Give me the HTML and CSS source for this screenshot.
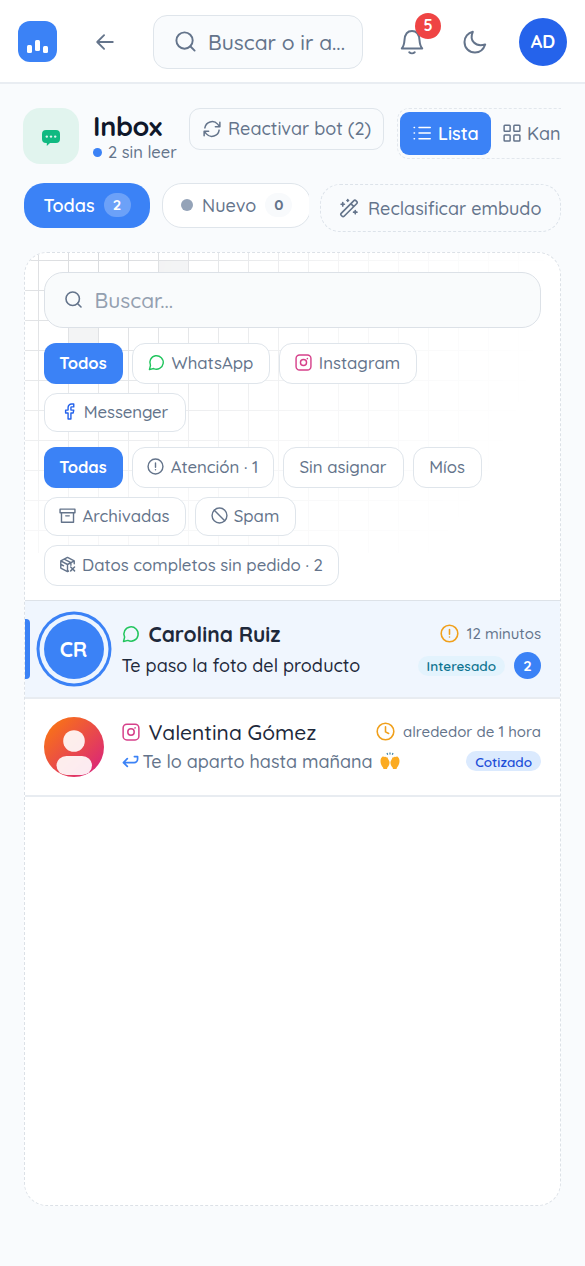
FILE: index.html
```html
<!DOCTYPE html>
<html lang="es">
<head>
<meta charset="utf-8">
<title>Inbox</title>
<link rel="stylesheet" href="styles.css">
</head>
<body>
<svg class="defs" width="0" height="0">
  <symbol id="i-search" viewBox="0 0 24 24"><circle cx="11" cy="11" r="8.5"/><path d="m21.500 21.500-4.500-4.500"/></symbol>
  <symbol id="i-wa" viewBox="0 0 24 24"><path d="M7.900 20.500A9.500 9.500 0 1 0 3.500 16.100L2 22Z"/></symbol>
  <symbol id="i-ig" viewBox="0 0 24 24"><rect x="1.500" y="1.500" width="21" height="21" rx="5"/><circle cx="12" cy="12" r="4.300"/><path d="M17.300 6.700 17.500 6.500"/></symbol>
  <symbol id="i-alert" viewBox="0 0 24 24"><circle cx="12" cy="12" r="10.500"/><path d="M12 7v6M12 16.400v.1"/></symbol>
</svg>

<header class="topbar">
  <div class="logo"><i></i><i></i><i></i></div>
  <svg class="icon back" viewBox="0 0 24 24"><path d="M20.500 12H4M11 4.500 3.500 12l7.500 7.500"/></svg>
  <div class="global-search"><svg class="icon"><use href="#i-search"/></svg><span>Buscar o ir a...</span></div>
  <div class="bell">
    <svg class="icon" viewBox="0 0 24 26"><path d="M1.800 19.500h20.400c-2-2.300-2.400-4.300-2.700-8.500C19.100 5.500 16.500 2 12 2S4.900 5.500 4.500 11c-.3 4.200-.7 6.200-2.700 8.500ZM9.300 23.200c1.500 1.500 3.900 1.500 5.400 0"/></svg>
    <b class="count">5</b>
  </div>
  <svg class="icon moon" viewBox="0 0 24 24"><path d="M9.800 1.800C6 10.500 12.500 17.500 22.200 14.500 20.500 19.500 16.500 22.500 12 22.500 6 22.500 1.500 18 1.500 12 1.500 7 5 2.800 9.800 1.800Z"/></svg>
  <div class="user">AD</div>
</header>

<main>
  <section class="heading">
    <div class="tile"><svg viewBox="0 0 18 16"><path d="M4 0h10a4 4 0 0 1 4 4v5a4 4 0 0 1-4 4H8l-3.200 3V13H4a4 4 0 0 1-4-4V4a4 4 0 0 1 4-4Z" fill="#10b981"/><g fill="#e1f4ee"><circle cx="4.800" cy="6.600" r="1.200"/><circle cx="9" cy="6.600" r="1.200"/><circle cx="13.200" cy="6.600" r="1.200"/></g></svg></div>
    <div class="title"><h1>Inbox</h1><p><i class="dot"></i><span>2 sin leer</span></p></div>
    <button class="reactivate"><svg class="icon" viewBox="0 0 24 24"><path d="M22.500 3v6h-6M1.500 21v-6h6M2.500 10.500A9.800 9.800 0 0 1 19.500 5.500L22.500 9M1.500 15l3 3.500a9.800 9.800 0 0 0 17-5"/></svg><span>Reactivar bot (2)</span></button>
    <div class="views"><button class="view on"><svg class="icon" viewBox="0 0 24 24"><path d="M8 4.500h15M8 12h15M8 19.500h15M1.500 4.500h.5M1.500 12h.5M1.500 19.500h.5"/></svg><span>Lista</span></button><button class="view kan"><svg class="icon" viewBox="0 0 24 24"><rect x="1.500" y="1.500" width="8" height="8" rx="1"/><rect x="14.500" y="1.500" width="8" height="8" rx="1"/><rect x="1.500" y="14.500" width="8" height="8" rx="1"/><rect x="14.500" y="14.500" width="8" height="8" rx="1"/></svg><span>Kan</span></button></div>
  </section>

  <section class="funnel">
    <div class="stages"><button class="stage on"><span>Todas</span><b>2</b></button><button class="stage"><i class="dot"></i><span>Nuevo</span><b>0</b></button></div>
    <button class="reclass"><svg class="icon" viewBox="0 0 24 24"><path d="M2.600 18.400 17.900 3.100a1.600 1.600 0 0 1 2.300 0l1.200 1.200a1.600 1.600 0 0 1 0 2.300L6.100 21.900a1.600 1.600 0 0 1-2.300 0l-1.200-1.200a1.600 1.600 0 0 1 0-2.300ZM14.500 7l3 3M4.500 5.500v4M2.500 7.500h4M19.500 15v4M17.500 17h4M10.500 2v2M9.500 3h2"/></svg><span>Reclasificar embudo</span></button>
  </section>

  <section class="panel">
    <div class="pattern"></div>
    <div class="filters">
      <div class="search"><svg class="icon"><use href="#i-search"/></svg><span>Buscar...</span></div>
      <div class="chips">
        <button class="chip on w79"><span>Todos</span></button>
        <button class="chip w138"><svg class="icon wa"><use href="#i-wa"/></svg><span>WhatsApp</span></button>
        <button class="chip w138"><svg class="icon ig"><use href="#i-ig"/></svg><span>Instagram</span></button>
        <button class="chip low w142"><svg class="icon fb" viewBox="0 0 24 24"><path d="M18 1.500h-3a5 5 0 0 0-5 5V10H6.500v4H10v8.500h4V14h3.200l.8-4h-4V6.500a1 1 0 0 1 1-1h3z"/></svg><span class="messenger">Messenger</span></button>
      </div>
      <div class="chips">
        <button class="chip on w79"><span>Todas</span></button>
        <button class="chip w142"><svg class="icon"><use href="#i-alert"/></svg><span>Atención · 1</span></button>
        <button class="chip w121"><span>Sin asignar</span></button>
        <button class="chip w68"><span>Míos</span></button>
        <button class="chip low w142"><svg class="icon" viewBox="0 0 24 24"><path d="M1.500 3h21v5h-21zM3.500 8v13.500h17V8M9.500 12.500h5"/></svg><span>Archivadas</span></button>
        <button class="chip low w101"><svg class="icon" viewBox="0 0 24 24"><circle cx="12" cy="12" r="10.500"/><path d="m4.600 4.600 14.800 14.800"/></svg><span>Spam</span></button>
        <button class="chip w295"><svg class="icon" viewBox="0 0 24 24"><path d="M21.500 11V7L12 2 2.500 7v10l9.500 5 1.500-.8M2.500 7l9.500 5 9.500-5M12 12v10M7.300 4.500l9.500 5v3.500M3 12l3.500 1.800M16.500 15.500l5.500 5.500M22 15.500 16.500 21"/></svg><span>Datos completos sin pedido · 2</span></button>
      </div>
    </div>
    <article class="chat unread">
      <div class="avatar cr">CR</div>
      <div class="body">
        <div class="line"><svg class="icon wa"><use href="#i-wa"/></svg><strong class="name">Carolina Ruiz</strong><span class="time"><svg class="icon"><use href="#i-alert"/></svg><span>12 minutos</span></span></div>
        <div class="line second"><span class="msg">Te paso la foto del producto</span><span class="tags"><span class="tag cyan">Interesado</span><b class="num">2</b></span></div>
      </div>
    </article>
    <article class="chat">
      <div class="avatar"><svg viewBox="0 0 60 60"><defs><linearGradient id="av" x1="0" y1="0" x2="1" y2="1"><stop offset=".1" stop-color="#f97316"/><stop offset=".9" stop-color="#db2777"/></linearGradient><clipPath id="round"><circle cx="30" cy="30" r="30"/></clipPath></defs><g clip-path="url(#round)"><rect width="60" height="60" fill="url(#av)"/><g fill="#fff" fill-opacity=".9"><circle cx="30" cy="24" r="10.800"/><rect x="12.500" y="39" width="35.500" height="19" rx="10"/></g></g></svg></div>
      <div class="body">
        <div class="line"><svg class="icon ig"><use href="#i-ig"/></svg><span class="name">Valentina Gómez</span><span class="time"><svg class="icon" viewBox="0 0 24 24"><circle cx="12" cy="12" r="10.500"/><path d="M12 6v6.500l4 2"/></svg><span>alrededor de 1 hora</span></span></div>
        <div class="line second"><svg class="icon reply" viewBox="0 0 24 24"><path d="M7.500 8 2 13.500 7.500 19M2.500 13.500H17a5 5 0 0 0 5-5V5h-4.500"/></svg><span class="msg">Te lo aparto hasta mañana</span><svg class="hands" viewBox="0 0 20 18"><path d="M.5 9c0-2 1-3.500 1.800-4.200.8-.7 1.500-.3 2 .2.700-.6 1.700-.4 2 .4.800-.2 1.400.3 1.600 1.200L9.400 9.500c.5 2-.4 4.500-2 6L7 17H3.500L3 15.500C1.200 13.500.5 11 .5 9ZM19.500 9c0-2-1-3.500-1.800-4.200-.8-.7-1.500-.3-2 .2-.7-.6-1.700-.4-2 .4-.8-.2-1.400.3-1.600 1.200L10.600 9.500c-.5 2 .4 4.500 2 6L13 17h3.500l.5-1.500c1.800-2 2.500-4.500 2.500-6.500Z" fill="#fbab22"/><path d="M10 .5v2M7 1l.7 1.800M13 1l-.7 1.800" stroke="#3b82a6" stroke-width="1.200"/></svg><span class="tags"><span class="tag blue">Cotizado</span></span></div>
      </div>
    </article>
  </section>
</main>
</body>
</html>
```
FILE: styles.css
```css
* { box-sizing: border-box; }
body { margin: 0; width: 585px; height: 1266px; overflow: hidden; background: #f9fbfd; color: #64748b; font: 500 16.8px Quicksand, Lato, "Open Sans", sans-serif; }
h1, p { margin: 0; }
button { font: inherit; color: inherit; padding: 0; white-space: nowrap; }
span { white-space: nowrap; }
.defs { display: block; position: absolute; }
.icon { flex: none; width: 18px; height: 18px; fill: none; stroke: currentColor; stroke-width: 2; stroke-linecap: round; stroke-linejoin: round; }
.wa { color: #22c55e; }
.ig { color: #d6408a; }
.fb { color: #2563eb; }

.topbar { display: flex; align-items: center; height: 84px; padding: 0 18px; background: #fff; border-bottom: 2px solid #e9edf2; }
.logo { display: flex; flex: none; align-items: flex-end; justify-content: center; gap: 3px; width: 39px; height: 41px; padding-bottom: 9px; border-radius: 12px; background: #3b82f6; }
.logo i { width: 5px; height: 8px; border-radius: 1.5px; background: #fff; }
.logo i:nth-child(2) { height: 11px; margin-bottom: 1.5px; }
.logo i:nth-child(3) { height: 7px; }
.back { width: 22px; height: 22px; margin-left: 37px; margin-top: 2px; }
.global-search { display: flex; flex: none; align-items: center; width: 210px; height: 54px; margin: 2px 0 0 37px; padding: 0 0 1px 20px; gap: 11px; border: 1.5px solid #dfe5eb; border-radius: 14px; background: #f9fbfd; font-size: 21px; }
.global-search .icon { width: 23px; height: 23px; }
.bell { position: relative; flex: none; width: 24px; height: 26px; margin: 1px 0 0 37px; }
.bell .icon { width: 24px; height: 26px; }
.count { position: absolute; left: 15px; top: -16px; width: 26px; height: 26px; border-radius: 50%; background: #ef4444; color: #fff; font-size: 16px; line-height: 25px; text-align: center; }
.moon { width: 24px; height: 24px; margin: 1px 0 0 39px; }
.user { width: 48px; height: 48px; margin: 2px 0 0 auto; flex: none; border-radius: 50%; background: #2563eb; color: #fff; font-size: 18px; font-weight: 700; line-height: 48px; text-align: center; }

main { padding: 24px 24px 0; }
.heading { display: flex; height: 52px; align-items: flex-start; }
.tile { display: grid; place-items: center; flex: none; width: 56px; height: 56px; margin-left: -1px; border-radius: 17px; background: #e1f4ee; }
.tile svg { width: 18px; height: 16px; margin-top: 3px; }
.title { width: 96px; margin-left: 14px; flex: none; }
.title h1 { height: 35px; color: #0f172a; font-size: 27px; font-weight: 700; line-height: 37px; letter-spacing: -.3px; }
.title p { display: flex; align-items: center; gap: 6px; line-height: 18px; font-size: 16.5px; }
.title .dot { width: 9px; height: 9px; border-radius: 50%; background: #3b82f6; }
.reactivate { display: flex; flex: none; align-items: center; gap: 7px; width: 195px; height: 42px; padding: 0 0 1px 13px; border: 1.5px solid #dfe5eb; border-radius: 11px; background: #f9fbfd; font-size: 18px; }
.views { display: flex; flex: 1; min-width: 0; height: 51px; margin-left: 13px; padding: 3px 0 3px 2px; border: 1.5px dashed #e2e7ed; border-right: 0; border-radius: 12px 0 0 12px; overflow: hidden; }
.view { display: flex; flex: none; align-items: center; gap: 7px; height: 43px; padding-bottom: 1px; border: 0; border-radius: 9px; background: none; font-size: 18px; }
.view.on { width: 91px; padding-left: 13px; background: #3b82f6; color: #fff; font-weight: 600; }
.view.kan { margin-left: 12px; gap: 6px; }

.funnel { display: flex; margin-top: 23px; height: 49px; }
.stages { display: flex; gap: 12px; width: 285px; overflow: hidden; }
.stage { display: flex; flex: none; align-items: center; width: 149px; height: 45px; padding: 0 0 1px 18px; border: 1.5px solid #dfe5eb; border-radius: 20px; background: #fff; font-size: 18px; }
.stage.on { width: 126px; padding-left: 19.5px; border: 0; background: #3b82f6; color: #fff; font-weight: 600; }
.stage b { width: 27px; height: 24px; margin-left: 9px; border-radius: 12px; background: #f8fafc; font-size: 15px; line-height: 24px; text-align: center; }
.stage.on b { background: #6ca1f8; }
.stage .dot { width: 12px; height: 12px; margin-right: 9px; border-radius: 50%; background: #94a3b8; }
.reclass { display: flex; align-items: center; gap: 9px; width: 241px; height: 48px; margin: 1px 0 0 11px; padding: 0 0 0 18px; border: 1.5px dashed #dde3ea; border-radius: 20px; background: none; font-size: 18px; }
.reclass .icon { width: 20px; height: 20px; }

.panel { position: relative; height: 954px; margin-top: 20px; border: 1.5px dashed #dce1e7; border-radius: 23px; background: #fff; overflow: hidden; }
.pattern { position: absolute; inset: 0 0 auto 0; height: 300px; background:
  linear-gradient(#f0f1f2, #f0f1f2) 134px 8px / 29px 29px no-repeat,
  linear-gradient(#f0f1f2, #f0f1f2) 44px 68px / 29px 29px no-repeat,
  repeating-linear-gradient(90deg, transparent 0 13px, #d9dbde 13px 14px, transparent 14px 30px),
  repeating-linear-gradient(transparent 0 7px, #d9dbde 7px 8px, transparent 8px 30px);
  mask-image: radial-gradient(circle at 70px 0, #000 0, rgba(0,0,0,.75) 100px, rgba(0,0,0,.25) 260px, transparent 460px); }
.filters { position: relative; height: 348px; padding: 19px 19px 0 18.5px; border-bottom: 1px solid #dde2e8; }
.search { display: flex; align-items: center; gap: 12px; height: 56px; padding: 0 0 1px 19px; border: 1.5px solid #dce1e7; border-radius: 19px; background: #f9fbfc; color: #94a0b0; font-size: 21px; }
.search .icon { width: 19px; height: 19px; color: #64748b; }
.chips { display: flex; flex-wrap: wrap; column-gap: 9px; row-gap: 9px; margin-top: 15px; }
.chip { display: flex; align-items: center; justify-content: center; gap: 7px; height: 41px; padding-bottom: 2px; border: 1.5px solid #dfe5eb; border-radius: 13px; background: #fff; }
.chip.on { background: #3b82f6; border: 0; color: #fff; font-weight: 700; font-size: 16.5px; border-radius: 12px; }
.chip.low { height: 39px; gap: 6px; }
.chip .icon { width: 17px; height: 17px; }
.messenger { letter-spacing: -.1px; }
.w68 { width: 69px; } .w79 { width: 79px; } .w101 { width: 101px; } .w121 { width: 121px; } .w138 { width: 138px; } .w142 { width: 142px; } .w295 { width: 295px; gap: 6px; }

.chat { display: flex; position: relative; height: 98px; padding: 18px 19px 0 18.5px; border-bottom: 2px solid #e8ecf1; }
.chat.unread { background: #f0f6fe; }
.chat.unread::before { content: ""; position: absolute; left: 0; top: 18px; width: 5px; height: 60px; border-radius: 0 4px 4px 0; background: #3b82f6; }
.avatar { flex: none; width: 60px; height: 60px; border-radius: 50%; }
.avatar svg { display: block; }
.cr { background: #3b82f6; color: #fff; font-size: 21px; font-weight: 700; line-height: 60px; text-align: center; box-shadow: 0 0 0 4.5px #edf5ff, 0 0 0 7.5px #3b82f6; }
.body { flex: 1; min-width: 0; margin: -1px 0 0 18px; }
.line { display: flex; align-items: center; height: 31px; color: #1e293b; }
.line > .icon { margin-right: 9px; }
.name { font-size: 21px; }
.msg { font-size: 18px; }
.time { display: flex; align-items: center; gap: 8px; margin-left: auto; color: #64748b; font-size: 15px; }
.time .icon { width: 19px; height: 19px; color: #f0a01c; }
.unread .second { height: 33px; }
.chat:not(.unread) .second { color: #64748b; height: 28px; }
.line > .reply { width: 17px; height: 17px; margin-right: 4px; color: #3b82f6; stroke-width: 2.4; }
.hands { width: 20px; height: 18px; margin-left: 7px; fill: none; }
.tags { display: flex; align-items: center; gap: 9px; margin-left: auto; }
.tag { display: flex; align-items: center; height: 20px; padding: 0 9px; border-radius: 10px; font-size: 13.5px; font-weight: 600; }
.cyan { background: #e3f3fd; color: #0e7490; }
.blue { background: #dbeafe; color: #1d4ed8; }
.num { width: 27px; height: 27px; border-radius: 50%; background: #3b82f6; color: #fff; font-size: 15px; line-height: 27px; text-align: center; }
```
